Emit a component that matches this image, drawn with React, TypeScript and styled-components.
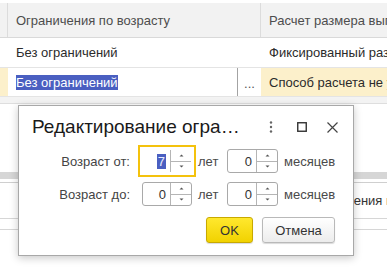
import React from 'react'
import styled, { createGlobalStyle } from 'styled-components'

const GlobalStyle = createGlobalStyle`
    html, body {
        margin: 0;
        padding: 0;
        background: #fff;
    }
    body {
        font-family: "Liberation Sans", Arial, sans-serif;
        font-size: 13px;
        color: #333;
    }
`;

const Page = styled.div`
    position: relative;
    width: 387px;
    height: 270px;
    overflow: hidden;
    background: #fff;
`;

// ---- Table behind the dialog ----

const Table = styled.div`
    padding-top: 3px;
`;

const HeaderRow = styled.div`
    display: flex;
    height: 34px;
    background: #f2f2f2;
    border-bottom: 1px solid #d9d9d9;
`;

type CellProps = {
    $w?: number,
    $bg?: string,
    $divider?: boolean,
}

const Cell = styled.div<CellProps>`
    display: flex;
    align-items: center;
    box-sizing: border-box;
    flex: ${({ $w }) => ($w ? `0 0 ${$w}px` : '1 1 auto')};
    min-width: 0;
    padding-left: ${({ $w }) => ($w && $w < 20 ? 0 : 8)}px;
    background: ${({ $bg }) => $bg || 'transparent'};
    border-right: ${({ $divider }) => ($divider ? '1px solid #dcdcdc' : 'none')};
    white-space: nowrap;
    overflow: hidden;
`;

const HeaderText = styled.span`
    color: #4d4d4d;
`;

type RowProps = {
    $h: number,
}

const Row = styled.div<RowProps>`
    display: flex;
    height: ${({ $h }) => $h}px;
    border-bottom: 1px solid #e4e4e4;
    color: #2b2b2b;
`;

const EditCell = styled.div`
    display: flex;
    flex: 0 0 253px;
    box-sizing: border-box;
    align-items: stretch;
`;

const EditText = styled.div`
    flex: 0 0 230px;
    display: flex;
    align-items: center;
    padding-left: 8px;
    box-sizing: border-box;
    border-right: 1px solid #a3a3a3;
`;

const Selected = styled.span`
    background: #4a5fc1;
    color: #fff;
    line-height: 15px;
`;

const Ellipsis = styled.div`
    flex: 1;
    display: flex;
    align-items: center;
    justify-content: center;
    color: #555;
    padding-top: 2px;
`;

const Band = styled.div`
    height: 6px;
    background: #f3f3f3;
    border-bottom: 1px solid #dedede;
`;

const GrayBar = styled.div`
    margin-top: 68px;
    height: 7px;
    background: #d6d6d6;
`;

const LowerRow = styled.div<RowProps>`
    height: ${({ $h }) => $h}px;
    border-bottom: 1px solid #d6d6d6;
    display: flex;
    align-items: center;
    padding-left: 281px;
    white-space: nowrap;
    color: #333;
`;

const LowerTop = styled.div`
    margin-top: 3px;
    border-top: 1px solid #cfcfcf;
`;

// ---- Dialog ----

const Dialog = styled.div`
    position: absolute;
    left: 18px;
    top: 105px;
    width: 336px;
    height: 151px;
    box-sizing: border-box;
    background: #fff;
    border: 1px solid #a8a8a8;
    box-shadow: 0 2px 8px rgba(0, 0, 0, 0.22);
    display: flex;
    flex-direction: column;
`;

const TitleBar = styled.div`
    display: flex;
    align-items: center;
    height: 42px;
    padding-left: 13px;
    padding-right: 5px;
`;

const Title = styled.div`
    flex: 0 0 210px;
    font-size: 19px;
    color: #1a1a1a;
    white-space: nowrap;
    overflow: hidden;
    text-overflow: ellipsis;
`;

const TitleSpacer = styled.div`
    flex: 1;
`;

const IconButton = styled.div`
    width: 31px;
    height: 31px;
    display: flex;
    align-items: center;
    justify-content: center;
`;

const Form = styled.div`
    display: flex;
    flex-direction: column;
    gap: 7px;
`;

const FormRow = styled.div`
    display: flex;
    align-items: center;
    height: 26px;
`;

const Label = styled.div`
    width: 111px;
    margin-right: 12px;
    text-align: right;
    color: #444;
`;

type FieldProps = {
    $w: number,
    $focused?: boolean,
}

const Field = styled.div<FieldProps>`
    display: flex;
    width: ${({ $w }) => $w}px;
    height: 24px;
    box-sizing: border-box;
    border: 1px solid ${({ $focused }) => ($focused ? '#fff' : '#a9a9a9')};
    border-radius: ${({ $focused }) => ($focused ? 0 : 3)}px;
    box-shadow: ${({ $focused }) => ($focused ? '0 0 0 2px #fff, 0 0 0 4px #f4c20d' : 'none')};
    background: #fff;
`;

const FieldValue = styled.div`
    flex: 1;
    display: flex;
    align-items: center;
    justify-content: flex-end;
    padding-right: 4px;
    color: #333;
`;

const SelectedDigit = styled.span`
    background: #4a5fc1;
    color: #e8ecff;
    line-height: 15px;
    padding: 0 1px;
`;

const Spinner = styled.div`
    flex: 0 0 20px;
    display: flex;
    flex-direction: column;
    border-left: 1px solid #b5b5b5;
`;

const SpinHalf = styled.div`
    flex: 1;
    display: flex;
    align-items: center;
    justify-content: center;
    & + & {
        border-top: 1px solid #b5b5b5;
    }
`;

type UnitProps = {
    $w?: number,
}

const Unit = styled.div<UnitProps>`
    margin: 0 7px 0 6px;
    width: ${({ $w }) => ($w ? `${$w}px` : 'auto')};
    color: #4a4a4a;
    white-space: nowrap;
`;

const Footer = styled.div`
    display: flex;
    justify-content: flex-end;
    gap: 9px;
    margin-top: 10px;
    padding-right: 18px;
`;

type ButtonProps = {
    $primary?: boolean,
    $w: number,
}

const Button = styled.div<ButtonProps>`
    width: ${({ $w }) => $w}px;
    height: 26px;
    box-sizing: border-box;
    display: flex;
    align-items: center;
    justify-content: center;
    border-radius: 3px;
    border: 1px solid ${({ $primary }) => ($primary ? '#c8a900' : '#b9b9b9')};
    background: ${({ $primary }) =>
        $primary
            ? 'linear-gradient(#ffe82e, #f1d200)'
            : 'linear-gradient(#ffffff, #ececec)'};
    box-shadow: 0 1px 1px rgba(0, 0, 0, 0.15);
    color: #333;
    font-size: 13px;
`;

const SpinArrow: React.FC<{ down?: boolean }> = ({ down }) => (
    <svg width="5" height="3" viewBox="0 0 5 3">
        {down
            ? <path d="M0.5 0.5 L2.5 2.5 L4.5 0.5 Z" fill="#555" />
            : <path d="M0.5 2.5 L2.5 0.5 L4.5 2.5 Z" fill="#555" />}
    </svg>
);

const SpinField: React.FC<{ w: number, value: string, focused?: boolean }> = ({ w, value, focused }) => (
    <Field $w={w} $focused={focused}>
        <FieldValue>
            {focused ? <SelectedDigit>{value}</SelectedDigit> : value}
        </FieldValue>
        <Spinner>
            <SpinHalf><SpinArrow /></SpinHalf>
            <SpinHalf><SpinArrow down /></SpinHalf>
        </Spinner>
    </Field>
);

const App: React.FC = () => {
    return (
        <Page>
            <GlobalStyle />
            <Table>
                <HeaderRow>
                    <Cell $w={8} $divider />
                    <Cell $w={253} $divider><HeaderText>Ограничения по возрасту</HeaderText></Cell>
                    <Cell><HeaderText>Расчет размера выплаты</HeaderText></Cell>
                </HeaderRow>
                <Row $h={29}>
                    <Cell $w={8} />
                    <Cell $w={253}>Без ограничений</Cell>
                    <Cell>Фиксированный размер</Cell>
                </Row>
                <Row $h={28}>
                    <Cell $w={8} $bg="#fcf0cb" />
                    <EditCell>
                        <EditText><Selected>Без ограничений</Selected></EditText>
                        <Ellipsis>...</Ellipsis>
                    </EditCell>
                    <Cell $bg="#fcf0cb">Способ расчета не указан</Cell>
                </Row>
                <Band />
            </Table>
            <GrayBar />
            <LowerTop>
                <LowerRow $h={35}>Без ограничения начисления</LowerRow>
                <LowerRow $h={10} />
            </LowerTop>

            <Dialog>
                <TitleBar>
                    <Title>Редактирование ограничения по возрасту</Title>
                    <TitleSpacer />
                    <IconButton>
                        <svg width="4" height="12" viewBox="0 0 4 12">
                            <circle cx="2" cy="1.5" r="1.2" fill="#666" />
                            <circle cx="2" cy="6" r="1.2" fill="#666" />
                            <circle cx="2" cy="10.5" r="1.2" fill="#666" />
                        </svg>
                    </IconButton>
                    <IconButton>
                        <svg width="10" height="10" viewBox="0 0 10 10">
                            <rect x="0.75" y="0.75" width="8.5" height="8.5" fill="none" stroke="#333" strokeWidth="1.4" />
                        </svg>
                    </IconButton>
                    <IconButton>
                        <svg width="11" height="11" viewBox="0 0 11 11">
                            <path d="M0.5 0.5 L10.5 10.5 M10.5 0.5 L0.5 10.5" stroke="#444" strokeWidth="1.2" />
                        </svg>
                    </IconButton>
                </TitleBar>
                <Form>
                    <FormRow>
                        <Label>Возраст от:</Label>
                        <SpinField w={50} value="7" focused />
                        <Unit $w={22}>лет</Unit>
                        <SpinField w={51} value="0" />
                        <Unit>месяцев</Unit>
                    </FormRow>
                    <FormRow>
                        <Label>Возраст до:</Label>
                        <SpinField w={50} value="0" />
                        <Unit $w={22}>лет</Unit>
                        <SpinField w={51} value="0" />
                        <Unit>месяцев</Unit>
                    </FormRow>
                </Form>
                <Footer>
                    <Button $primary $w={47}>OK</Button>
                    <Button $w={73}>Отмена</Button>
                </Footer>
            </Dialog>
        </Page>
    )
}

export default App;
